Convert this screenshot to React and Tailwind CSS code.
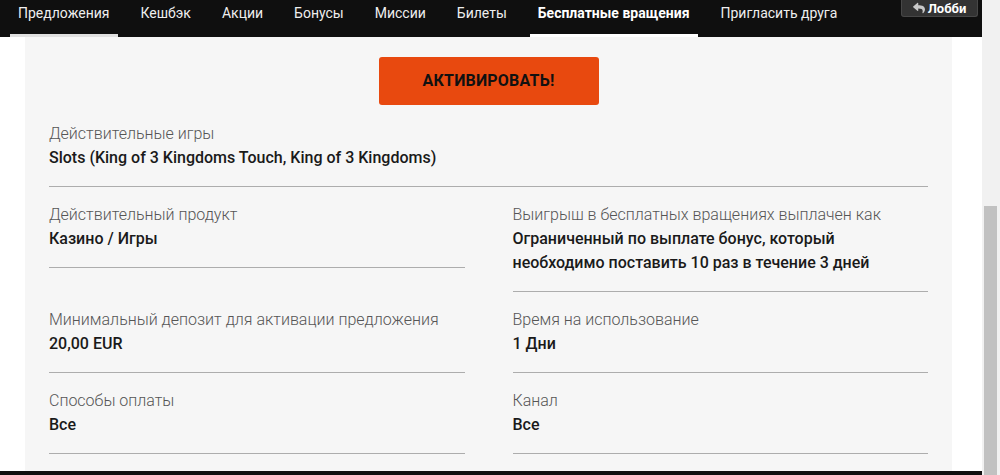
import React from "react";
import { FaReply } from "react-icons/fa";

const tabs = [
  "Предложения",
  "Кешбэк",
  "Акции",
  "Бонусы",
  "Миссии",
  "Билеты",
  "Бесплатные вращения",
  "Пригласить друга",
];

function Field({ label, value, full }) {
  return (
    <div
      className={
        "self-start border-b border-[#adadad] pb-4 mb-4 " + (full ? "col-span-2" : "")
      }
    >
      <div className="text-[16px] leading-[24px] font-light text-[#555555]">{label}</div>
      <div className="text-[16px] leading-[24px] font-medium text-[#1a1a1a]">{value}</div>
    </div>
  );
}

export default function App() {
  return (
    <div
      className="w-[1000px] h-[475px] overflow-hidden flex bg-white"
      style={{ fontFamily: "Roboto, 'Noto Sans', sans-serif" }}
    >
      <div className="w-[982px] flex flex-col">
        <nav className="h-[37px] bg-[#0f0f0f] flex items-stretch pl-[10px] shrink-0">
          <div className="flex gap-[15px]">
            {tabs.map((t, i) => {
              const active = i === 6;
              const first = i === 0;
              return (
                <div
                  key={t}
                  className={
                    "px-2 pt-[3px] text-[14px] leading-[20px] border-b-[3px] " +
                    (active
                      ? "text-white font-bold border-white"
                      : first
                      ? "text-[#eeeeee] border-[#e0e0e0]"
                      : "text-[#eeeeee] border-transparent")
                  }
                >
                  {t}
                </div>
              );
            })}
          </div>
          <div className="ml-auto mr-[4px] self-start h-[17px] w-[77px] bg-[#333333] border border-t-0 border-[#474747] rounded-b-[3px] flex items-center justify-center gap-[3px] text-white text-[13px] font-bold leading-none">
            <FaReply className="text-[#c8c8c8] w-[12px] h-[12px]" />
            <span>Лобби</span>
          </div>
        </nav>
        <div className="flex-1 px-[25px] pr-[30px] flex flex-col">
          <div className="bg-[#f6f6f6] px-6 pt-[20px] flex-1 flex flex-col">
            <div className="flex justify-center mb-[17px]">
              <button className="w-[220px] h-[48px] bg-[#e8490f] rounded-[3px] text-[#111111] text-[16px] font-bold tracking-[0.2px]">
                АКТИВИРОВАТЬ!
              </button>
            </div>
            <div className="grid grid-cols-2 gap-x-12">
              <Field
                full
                label="Действительные игры"
                value="Slots (King of 3 Kingdoms Touch, King of 3 Kingdoms)"
              />
              <Field label="Действительный продукт" value="Казино / Игры" />
              <Field
                label="Выигрыш в бесплатных вращениях выплачен как"
                value="Ограниченный по выплате бонус, который необходимо поставить 10 раз в течение 3 дней"
              />
              <Field
                label="Минимальный депозит для активации предложения"
                value="20,00 EUR"
              />
              <Field label="Время на использование" value="1 Дни" />
              <Field label="Способы оплаты" value="Все" />
              <Field label="Канал" value="Все" />
            </div>
          </div>
        </div>
        <div className="h-[4px] bg-[#0f0f0f] shrink-0" />
      </div>
      <div className="w-[18px] bg-[#f1f1f1] flex flex-col">
        <div className="mt-[206px] mx-[2px] mr-[3px] flex-1 bg-[#c1c1c1]" />
      </div>
    </div>
  );
}
